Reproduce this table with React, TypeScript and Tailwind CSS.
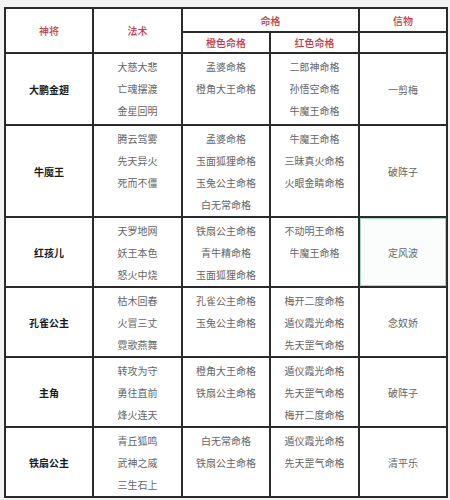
import React from "react";

type Row = {
  name: string;
  skills: string[];
  orange: string[];
  red: string[];
  item: string;
  h: string;
  picked?: boolean;
};

const rows: Row[] = [
  {
    name: "大鹏金翅",
    skills: ["大慈大悲", "亡魂摆渡", "金星回明"],
    orange: ["孟婆命格", "橙角大王命格"],
    red: ["二郎神命格", "孙悟空命格", "牛魔王命格"],
    item: "一剪梅",
    h: "h-[72px]",
  },
  {
    name: "牛魔王",
    skills: ["腾云驾雾", "先天异火", "死而不僵"],
    orange: ["孟婆命格", "玉面狐狸命格", "玉兔公主命格", "白无常命格"],
    red: ["牛魔王命格", "三昧真火命格", "火眼金睛命格"],
    item: "破阵子",
    h: "h-[92px]",
  },
  {
    name: "红孩儿",
    skills: ["天罗地网", "妖王本色", "怒火中烧"],
    orange: ["铁扇公主命格", "青牛精命格", "玉面狐狸命格"],
    red: ["不动明王命格", "牛魔王命格"],
    item: "定风波",
    h: "h-[70px]",
    picked: true,
  },
  {
    name: "孔雀公主",
    skills: ["枯木回春", "火冒三丈", "霓歌燕舞"],
    orange: ["孔雀公主命格", "玉兔公主命格"],
    red: ["梅开二度命格", "遁仪霞光命格", "先天罡气命格"],
    item: "念奴娇",
    h: "h-[70px]",
  },
  {
    name: "主角",
    skills: ["转攻为守", "勇往直前", "烽火连天"],
    orange: ["橙角大王命格", "铁扇公主命格"],
    red: ["遁仪霞光命格", "先天罡气命格", "梅开二度命格"],
    item: "破阵子",
    h: "h-[70px]",
  },
  {
    name: "铁扇公主",
    skills: ["青丘狐鸣", "武神之威", "三生石上"],
    orange: ["白无常命格", "铁扇公主命格"],
    red: ["遁仪霞光命格", "先天罡气命格"],
    item: "清平乐",
    h: "h-[70px]",
  },
];

const cell = "border-2 border-[#2b2b2b] text-center align-middle p-0";

const Lines = ({ items }: { items: string[] }) => (
  <td className={`${cell} align-top pt-[2px]`}>
    {items.map((t) => (
      <div key={t} className="leading-[22px]">
        {t}
      </div>
    ))}
  </td>
);

export default function App() {
  return (
    <div
      className="w-[450px] h-[500px] bg-[#f3f3f3] pt-[7px] pl-[4px]"
      style={{ fontFamily: '"Noto Sans CJK SC", "Noto Sans", sans-serif' }}
    >
      <table className="w-[442px] table-fixed border-collapse bg-white text-[10px] text-[#666]">
        <colgroup>
          <col className="w-[88px]" />
          <col className="w-[89px]" />
          <col className="w-[88px]" />
          <col className="w-[89px]" />
          <col className="w-[88px]" />
        </colgroup>
        <thead className="text-[#c33a44]">
          <tr className="h-[24px]">
            <th rowSpan={2} className={`${cell} font-medium`}>
              神将
            </th>
            <th rowSpan={2} className={`${cell} font-medium`}>
              法术
            </th>
            <th colSpan={2} className={`${cell} font-medium`}>
              命格
            </th>
            <th className={`${cell} font-medium`}>信物</th>
          </tr>
          <tr className="h-[21px]">
            <th className={`${cell} font-medium`}>橙色命格</th>
            <th className={`${cell} font-medium`}>红色命格</th>
            <th className={cell}></th>
          </tr>
        </thead>
        <tbody>
          {rows.map((r) => (
            <tr key={r.name} className={r.h}>
              <td className={`${cell} font-semibold text-[#1a1a1a]`}>{r.name}</td>
              <Lines items={r.skills} />
              <Lines items={r.orange} />
              <Lines items={r.red} />
              <td
                className={`${cell} ${
                  r.picked ? "bg-[#fafdfc] shadow-[inset_0_0_0_1px_#a8d8cc]" : ""
                }`}
              >
                {r.item}
              </td>
            </tr>
          ))}
        </tbody>
      </table>
    </div>
  );
}
